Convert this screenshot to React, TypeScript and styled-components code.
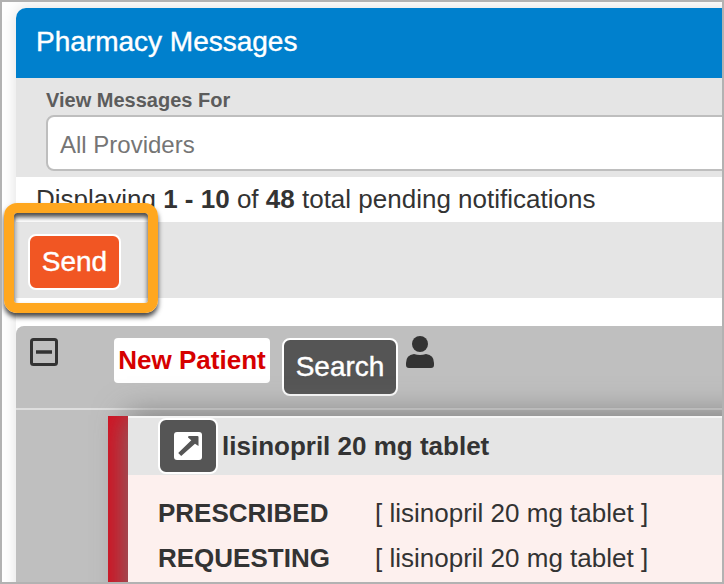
import React from "react";
import styled, { createGlobalStyle } from "styled-components";

const GlobalStyle = createGlobalStyle`
  *, *::before, *::after { box-sizing: border-box; }
  body {
    margin: 0;
    background: #fff;
    color: #333;
    font-family: "Liberation Sans", Arial, sans-serif;
    font-size: 26px;
  }
`;

const Frame = styled.div`
  position: relative;
  width: 724px;
  height: 584px;
  padding: 6px 0 0 14px;
  border: 2px solid #b2b2b2;
  overflow: hidden;
  background: #fff;
`;

const Panel = styled.main`
  width: 760px;
  height: 640px;
  border-radius: 10px 10px 0 0;
  background: #fff;
  box-shadow: 0 0 16px rgba(0, 0, 0, 0.13);
`;

const TitleBar = styled.header`
  display: flex;
  height: 70px;
  padding: 18px 20px 0;
  border-radius: 10px 10px 0 0;
  background: #0080cd;
  color: #fff;
`;

const Title = styled.h1`
  margin: 0;
  font-size: 28px;
  font-weight: 400;
  line-height: 32px;
  -webkit-text-stroke: 0.4px currentColor;
`;

const Filters = styled.section`
  display: flex;
  flex-direction: column;
  height: 99px;
  padding: 10px 0 0 30px;
  background: #e5e5e5;
`;

const FilterLabel = styled.label`
  height: 27px;
  color: #5c5c5c;
  font-size: 20px;
  font-weight: 700;
  line-height: 24px;
`;

const SelectBox = styled.div`
  display: flex;
  align-items: center;
  height: 56px;
  padding: 3px 12px 0;
  border: 2px solid #bebebe;
  border-radius: 8px;
  background: #fff;
  color: #757575;
  font-size: 24px;
`;

const Summary = styled.p`
  height: 45px;
  margin: 0;
  padding-left: 20px;
  line-height: 44px;
  white-space: nowrap;
`;

const Toolbar = styled.div`
  height: 76px;
  margin-bottom: 28px;
  padding: 12px;
  background: #e5e5e5;
`;

const Button = styled.button<{ $width: number; $height: number; $tone: string }>`
  display: flex;
  align-items: center;
  justify-content: center;
  width: ${(p) => p.$width}px;
  height: ${(p) => p.$height}px;
  padding: 0;
  border: 2px solid #fff;
  border-radius: 8px;
  background: ${(p) => p.$tone};
  color: #fff;
  font-family: inherit;
  font-size: 28px;
  line-height: 32px;
  -webkit-text-stroke: 0.4px currentColor;
`;

const Group = styled.section`
  height: 330px;
  border-radius: 8px 0 0 0;
  background: #bfbfbf;
`;

const GroupHeader = styled.div`
  display: flex;
  align-items: flex-start;
  height: 84px;
  padding: 12px 0 0 13px;
  border-bottom: 2px solid #dedede;
`;

const CollapseIcon = styled.svg`
  width: 30px;
  height: 30px;
  margin-right: 55px;
`;

const PatientTag = styled.span`
  display: flex;
  justify-content: center;
  width: 156px;
  height: 45px;
  margin-right: 12px;
  border-radius: 4px;
  background: #fff;
  color: #d60000;
  font-weight: 700;
  line-height: 44px;
  white-space: nowrap;
`;

const PersonIcon = styled.svg`
  width: 28px;
  height: 32px;
  margin: -2px 0 0 8px;
`;

const GroupBody = styled.div`
  padding: 6px 0 0 92px;
`;

/* The shadow falls over the group header and onto the severity stripe. */
const Message = styled.article`
  display: flex;
  height: 220px;
  background: #d31020;
`;

const MessageContent = styled.div`
  flex: 1;
  margin-left: 20px;
  background: #fdf0ee;
  box-shadow: 0 0 30px 1px rgb(120, 120, 120);
  clip-path: inset(-40px 0 0 -40px);
`;

const MessageHeader = styled.div`
  display: flex;
  align-items: flex-start;
  height: 59px;
  padding: 0 0 0 30px;
  border-top: 2px solid #f5f5f5;
  background: #e5e5e5;
`;

const DrugName = styled.strong`
  margin-left: 4px;
  line-height: 57px;
  white-space: nowrap;
`;

const Details = styled.dl`
  display: grid;
  grid-template-columns: 217px auto;
  grid-auto-rows: 45px;
  margin: 0;
  padding: 15px 0 0 30px;
  line-height: 46px;
  white-space: nowrap;
`;

const DetailLabel = styled.dt`
  font-weight: 700;
`;

const DetailValue = styled.dd`
  margin: 0;
`;

const Highlight = styled.div`
  position: absolute;
  left: 2px;
  top: 201px;
  width: 154px;
  height: 110px;
  border: 10px solid #ffa71f;
  border-radius: 13px;
  box-shadow: 0 4px 5px rgba(0, 0, 0, 0.72), inset 0 4px 5px rgba(0, 0, 0, 0.72);
  pointer-events: none;
`;

const details = [
  { label: "PRESCRIBED", value: "[ lisinopril 20 mg tablet ]" },
  { label: "REQUESTING", value: "[ lisinopril 20 mg tablet ]" },
];

export default function App() {
  return (
    <>
      <GlobalStyle />
      <Frame>
        <Panel>
          <TitleBar>
            <Title>Pharmacy Messages</Title>
          </TitleBar>
          <Filters>
            <FilterLabel>View Messages For</FilterLabel>
            <SelectBox>All Providers</SelectBox>
          </Filters>
          <Summary>
            Displaying <b>1 - 10</b> of <b>48</b> total pending notifications
          </Summary>
          <Toolbar>
            <Button $width={93} $height={56} $tone="#f15623">Send</Button>
          </Toolbar>
          <Group>
            <GroupHeader>
              <CollapseIcon viewBox="0 0 30 30" fill="none" stroke="#333">
                <rect x="2.5" y="1.5" width="25" height="25" rx="2" strokeWidth="3" />
                <path d="M7 14h16" strokeWidth="3.5" />
              </CollapseIcon>
              <PatientTag>New Patient</PatientTag>
              <Button $width={116} $height={58} $tone="#555">Search</Button>
              <PersonIcon viewBox="0 0 28 32" fill="#333">
                <circle cx="14" cy="8" r="8" />
                <path d="M8 18Q14 20 20 18Q28 19 28 27V29Q28 32 25 32H3Q0 32 0 29V27Q0 19 8 18Z" />
              </PersonIcon>
            </GroupHeader>
            <GroupBody>
              <Message>
                <MessageContent>
                  <MessageHeader>
                    <Button $width={60} $height={56} $tone="#555" aria-label="Open message">
                      <svg width="28" height="28" viewBox="0 0 28 28">
                        <rect width="28" height="28" rx="3" fill="#fff" />
                        <path
                          d="M14.5 4H23.5Q24.5 4 24.5 5V14L21 11.8L7.2 24L4.2 21L17.3 8.3L14 5.5Z"
                          fill="#555"
                        />
                      </svg>
                    </Button>
                    <DrugName>lisinopril 20 mg tablet</DrugName>
                  </MessageHeader>
                  <Details>
                    {details.map((row) => (
                      <React.Fragment key={row.label}>
                        <DetailLabel>{row.label}</DetailLabel>
                        <DetailValue>{row.value}</DetailValue>
                      </React.Fragment>
                    ))}
                  </Details>
                </MessageContent>
              </Message>
            </GroupBody>
          </Group>
        </Panel>
        <Highlight />
      </Frame>
    </>
  );
}
